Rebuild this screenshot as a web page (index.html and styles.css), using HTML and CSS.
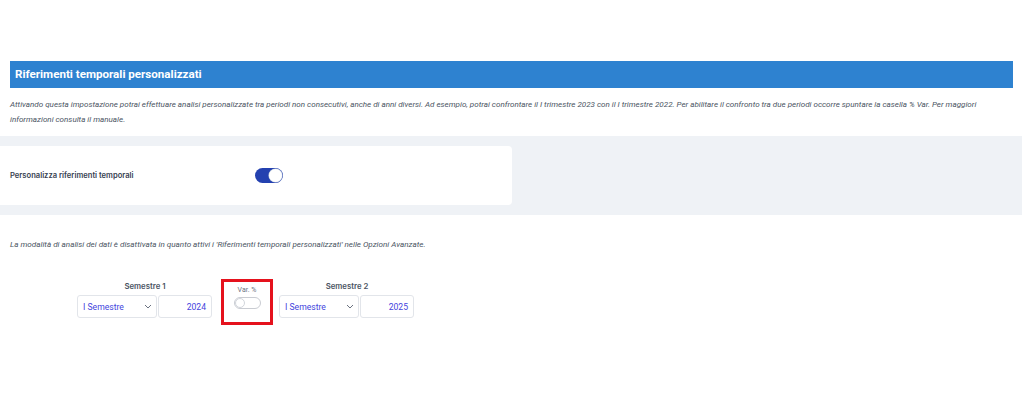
FILE: index.html
```html
<!DOCTYPE html>
<html lang="it">
<head>
    <meta charset="UTF-8">
    <title>Riferimenti temporali personalizzati</title>
    <link rel="stylesheet" href="styles.css">
</head>
<body>

<div class="section-head">Riferimenti temporali personalizzati</div>
<p class="hint">Attivando questa impostazione potrai effettuare analisi personalizzate tra periodi non consecutivi, anche di anni diversi. Ad esempio, potrai confrontare il I trimestre 2023 con il I trimestre 2022. Per abilitare il confronto tra due periodi occorre spuntare la casella % Var. Per maggiori informazioni consulta il manuale.</p>

<div class="band">
    <div class="card">
        <span class="card-label">Personalizza riferimenti temporali</span>
        <span class="switch on"><span class="knob"></span></span>
    </div>
</div>

<p class="hint notice">La modalità di analisi dei dati è disattivata in quanto attivi i 'Riferimenti temporali personalizzati' nelle Opzioni Avanzate.</p>

<div class="periods">
    <div class="period">
        <div class="period-label">Semestre 1</div>
        <div class="controls">
            <div class="select">I Semestre
                <svg width="8" height="5" viewBox="0 0 8 5"><path d="M1 1l3 3 3-3" fill="none" stroke="#6b7280" stroke-width="1"/></svg>
            </div>
            <div class="year">2024</div>
        </div>
    </div>
    <div class="var-box">
        <div class="var-label">Var. %</div>
        <span class="switch off"><span class="knob"></span></span>
    </div>
    <div class="period">
        <div class="period-label">Semestre 2</div>
        <div class="controls">
            <div class="select">I Semestre
                <svg width="8" height="5" viewBox="0 0 8 5"><path d="M1 1l3 3 3-3" fill="none" stroke="#6b7280" stroke-width="1"/></svg>
            </div>
            <div class="year">2025</div>
        </div>
    </div>
</div>

</body>
</html>
```

FILE: styles.css
```css
* {
    margin: 0;
    padding: 0;
    box-sizing: border-box;
}
body {
    background: #fff;
    font-family: 'Roboto', 'Liberation Sans', sans-serif;
    color: #374151;
}
.section-head {
    margin: 61px 11px 0 10px;
    height: 27px;
    padding-left: 5px;
    background: #2e82d0;
    color: #fff;
    font-size: 11.6px;
    font-weight: 700;
    line-height: 27px;
}
.hint {
    margin: 9px 10px 0 10px;
    font-size: 8.05px;
    line-height: 15px;
    font-style: italic;
    color: #4b5563;
}
.band {
    margin-top: 9px;
    background: #eff2f6;
    padding: 10px 0 10px 0;
    margin-right: 2px;
}
.card {
    width: 512px;
    height: 59px;
    background: #fff;
    border-radius: 0 4px 4px 0;
    display: flex;
    align-items: center;
    padding-left: 10px;
}
.card-label {
    font-family: 'Inter', sans-serif;
    font-size: 7.6px;
    font-weight: 600;
    color: #374151;
    width: 245px;
}
.switch {
    display: inline-block;
    position: relative;
    width: 28px;
    height: 15px;
    border-radius: 8px;
}
.switch .knob {
    position: absolute;
    top: 1px;
    width: 13px;
    height: 13px;
    border-radius: 50%;
    background: #fff;
}
.switch.on {
    background: #2441b0;
}
.switch.on .knob {
    right: 1px;
    box-shadow: 0 0 0 0.5px #cbd5e1;
}
.switch.off {
    width: 27px;
    height: 12px;
    background: #fff;
    border: 1px solid #c9ccd2;
}
.switch.off .knob {
    top: 0;
    left: 0;
    width: 10px;
    height: 10px;
    border: 1px solid #d1d5db;
}
.notice {
    margin-top: 22px;
    font-size: 8.1px;
}
.periods {
    display: flex;
    align-items: flex-start;
    margin: 27px 0 0 77px;
}
.period-label {
    font-family: 'Inter', sans-serif;
    font-size: 7.8px;
    font-weight: 600;
    color: #4b5563;
    text-align: center;
    margin: 2px 0 4px;
    padding-left: 1px;
}
.controls {
    display: flex;
    gap: 1px;
}
.select, .year {
    height: 23px;
    border: 1px solid #e2e5ea;
    border-radius: 3px;
    background: #fff;
    font-size: 8.6px;
    color: #4444dd;
    display: flex;
    align-items: center;
}
.select {
    width: 80px;
    padding: 0 4px 0 5px;
    justify-content: space-between;
}
.year {
    width: 54px;
    justify-content: flex-end;
    padding-right: 5px;
}
.var-box {
    width: 52px;
    height: 46px;
    margin: 0 6px 0 9px;
    border: 3px solid #e5121d;
    display: flex;
    flex-direction: column;
    align-items: center;
}
.var-label {
    font-size: 7px;
    color: #6b7280;
    margin: 4px 0 3px;
}
```
